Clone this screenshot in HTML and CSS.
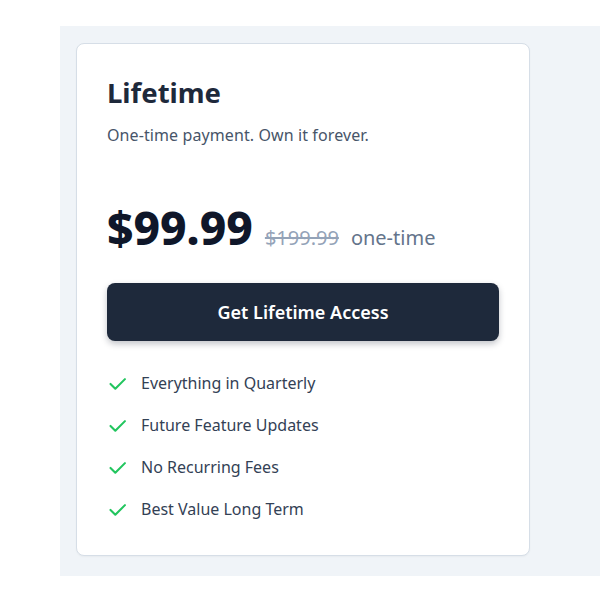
FILE: index.html
```html
<!DOCTYPE html>
<html lang="en">

<head>
    <meta charset="UTF-8">
    <meta name="viewport" content="width=device-width, initial-scale=1.0">
    <title>Lifetime Plan</title>
    <link rel="stylesheet" href="styles.css">
</head>

<body>
    <div class="pricing">
        <div class="plan">
            <h2 class="plan-name">Lifetime</h2>
            <p class="plan-desc">One-time payment. Own it forever.</p>

            <div class="price-row">
                <span class="price">$99.99</span>
                <span class="old-price">$199.99</span>
                <span class="period">one-time</span>
            </div>

            <button class="buy-btn">Get Lifetime Access</button>

            <ul class="features">
                <li>
                    <svg class="check" viewBox="0 0 24 24"><polyline points="4 12.5 9.5 18 20.5 7"></polyline></svg>
                    Everything in Quarterly
                </li>
                <li>
                    <svg class="check" viewBox="0 0 24 24"><polyline points="4 12.5 9.5 18 20.5 7"></polyline></svg>
                    Future Feature Updates
                </li>
                <li>
                    <svg class="check" viewBox="0 0 24 24"><polyline points="4 12.5 9.5 18 20.5 7"></polyline></svg>
                    No Recurring Fees
                </li>
                <li>
                    <svg class="check" viewBox="0 0 24 24"><polyline points="4 12.5 9.5 18 20.5 7"></polyline></svg>
                    Best Value Long Term
                </li>
            </ul>
        </div>
    </div>
</body>

</html>
```

FILE: styles.css
```css
body {
    font-family: "Noto Sans", "Open Sans", sans-serif;
    background-color: #ffffff;
    margin: 0;
}

.pricing {
    margin: 26px 0 0 60px;
    padding: 17px 16px 20px 16px;
    background-color: #f0f4f8;
}

.plan {
    width: 392px;
    padding: 30px 30px 34px 30px;
    background-color: white;
    border: 1px solid #d6dee7;
    border-radius: 8px;
    box-shadow: 0 1px 2px rgba(0, 0, 0, 0.04);
}

.plan-name {
    margin: 0;
    font-size: 27.5px;
    line-height: 37px;
    font-weight: 700;
    color: #1e293b;
}

.plan-desc {
    margin: 13px 0 0 0;
    font-size: 16px;
    line-height: 22px;
    letter-spacing: 0.1px;
    color: #475569;
}

.price-row {
    margin-top: 53px;
    display: flex;
    align-items: baseline;
    gap: 12px;
}

.price {
    font-size: 46px;
    line-height: 56px;
    font-weight: 800;
    color: #0f172a;
}

.old-price {
    font-size: 20px;
    color: #94a3b8;
    text-decoration: line-through;
}

.period {
    font-size: 20px;
    color: #64748b;
}

.buy-btn {
    display: block;
    width: 100%;
    margin-top: 28px;
    height: 58px;
    font-family: inherit;
    font-size: 18px;
    font-weight: 600;
    background-color: #1e293b;
    color: white;
    border: none;
    border-radius: 8px;
    box-shadow: 0 3px 6px rgba(15, 23, 42, 0.25);
    cursor: pointer;
}

.features {
    list-style: none;
    margin: 30px 0 0 0;
    padding: 0;
    display: flex;
    flex-direction: column;
    gap: 18px;
}

.features li {
    display: flex;
    align-items: center;
    gap: 13px;
    font-size: 16px;
    line-height: 24px;
    color: #334155;
}

.check {
    width: 21px;
    height: 21px;
    fill: none;
    stroke: #22c55e;
    stroke-width: 2.4;
    stroke-linecap: round;
    stroke-linejoin: round;
}
```
